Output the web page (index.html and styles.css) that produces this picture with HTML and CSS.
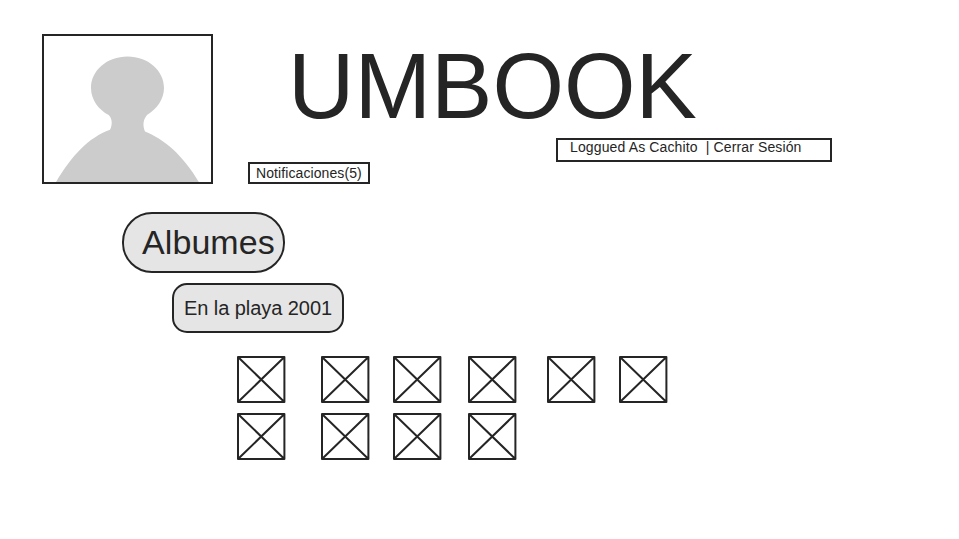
FILE: index.html
```
<!DOCTYPE html>
<html lang="es">
<head>
<meta charset="utf-8">
<title>UMBOOK</title>
<link rel="stylesheet" href="styles.css">
</head>
<body>
<svg class="defs" aria-hidden="true">
  <symbol id="photo" viewBox="0 0 49 48">
    <path d="M1 1H47.4V46H1ZM1 1L47.4 46M47.4 1L1 46" fill="none" stroke="#252525" stroke-width="2" stroke-linejoin="round"/>
  </symbol>
</svg>
<header class="header">
  <svg class="avatar" viewBox="0 0 171 150">
    <path d="M13.5 149C30 121 47 103.500 68 95.800C70.500 91 70.500 85 66.700 81C57 76 49 66 49 54C49 36.500 65 22.500 85.500 22.500C106 22.500 122 36.500 122 54C122 65 115 75 105 81C101 86 100.500 91 103 97.500C122 105 141 121 157.500 149Z" fill="#ccc"/>
    <rect x="1" y="1" width="169" height="148" fill="none" stroke="#252525" stroke-width="2"/>
  </svg>
  <div class="masthead">
    <h1 class="title">UMBOOK</h1>
    <div class="session">Loggued As Cachito&nbsp; | Cerrar Sesión</div>
    <div class="notifications">Notificaciones(5)</div>
  </div>
</header>
<main>
  <h2 class="albums">Albumes</h2>
  <h3 class="album">En la playa 2001</h3>
  <div class="photos">
    <svg><use href="#photo"/></svg>
    <svg><use href="#photo"/></svg>
    <svg><use href="#photo"/></svg>
    <svg><use href="#photo"/></svg>
    <svg><use href="#photo"/></svg>
    <svg><use href="#photo"/></svg>
    <svg><use href="#photo"/></svg>
    <svg><use href="#photo"/></svg>
    <svg><use href="#photo"/></svg>
    <svg><use href="#photo"/></svg>
  </div>
</main>
</body>
</html>
```
FILE: styles.css
```
* { box-sizing: border-box; }
body {
  margin: 0;
  background: #fff;
  color: #252525;
  font-family: "Liberation Sans", Arial, sans-serif;
}
.defs { display: none; }
.header {
  display: flex;
  gap: 35px;
  height: 184px;
  padding: 34px 0 0 42px;
}
.avatar { width: 171px; height: 150px; }
.masthead {
  display: flex;
  flex-direction: column;
  width: 584px;
}
.title {
  height: 104px;
  margin: 0 0 0 40px;
  font-size: 92px;
  font-weight: 400;
  line-height: 104px;
  white-space: nowrap;
}
.session,
.notifications {
  border: 2px solid #252525;
  font-size: 14px;
  letter-spacing: 0.13px;
  white-space: nowrap;
}
.session {
  align-self: flex-end;
  width: 276px;
  height: 24px;
  padding-left: 12px;
  line-height: 14px;
}
.notifications {
  width: 122px;
  height: 22px;
  padding-left: 6px;
  letter-spacing: 0.09px;
  line-height: 18px;
}
.albums,
.album {
  border: 2px solid #252525;
  background: #e5e5e5;
  font-weight: 400;
  white-space: nowrap;
}
.albums {
  width: 163px;
  height: 61px;
  margin: 28px 0 0 122px;
  padding-left: 18px;
  border-radius: 30px;
  font-size: 34px;
  letter-spacing: 0.08px;
  line-height: 57px;
}
.album {
  width: 172px;
  height: 50px;
  margin: 10px 0 0 172px;
  padding-left: 10px;
  border-radius: 15px;
  font-size: 20px;
  letter-spacing: -0.06px;
  line-height: 46px;
}
.photos {
  display: grid;
  grid-template-columns: 84px 72px 75px 79px 72px 49px;
  row-gap: 9px;
  margin: 23px 0 0 237px;
}
.photos svg { display: block; width: 49px; height: 48px; }
```
